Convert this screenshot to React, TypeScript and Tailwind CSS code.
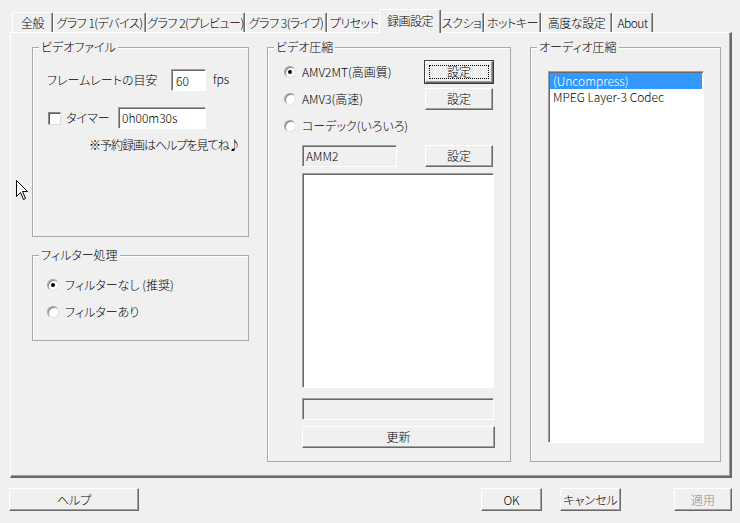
import type { ReactNode } from 'react';

type Tab = { label: string; cls: string; selected?: boolean };

const tabs: Tab[] = [
  { label: '全般', cls: 'w-[41px]' },
  { label: 'グラフ 1(デバイス)', cls: 'w-[93px]' },
  { label: 'グラフ 2(プレビュー)', cls: 'w-[99px]' },
  { label: 'グラフ 3(ライブ)', cls: 'w-[82px]' },
  { label: 'プリセット', cls: 'w-[54px]' },
  { label: '録画設定', cls: 'w-[62px]', selected: true },
  { label: 'スクショ', cls: 'w-[45px]' },
  { label: 'ホットキー', cls: 'w-[57px]' },
  { label: '高度な設定', cls: 'w-[71px]' },
  { label: 'About', cls: 'w-[41px]' },
];

const raised =
  'border border-t-white border-l-white border-r-[#696969] border-b-[#696969] shadow-[inset_-1px_-1px_0_#a0a0a0] bg-[#f0f0f0]';
const sunken =
  'border border-t-[#a0a0a0] border-l-[#a0a0a0] border-r-white border-b-white shadow-[inset_1px_1px_0_#696969]';

function Btn({
  children,
  className = '',
  focus,
  disabled,
}: {
  children: ReactNode;
  className?: string;
  focus?: boolean;
  disabled?: boolean;
}) {
  return (
    <div
      className={`relative flex shrink-0 items-center justify-center leading-[14px] ${raised} ${
        focus ? 'outline outline-1 outline-[#3c3c3c]' : ''
      } ${disabled ? 'text-[#8d8d8d]' : 'text-black'} ${className}`}
    >
      {focus && <span className="absolute inset-[3px] border border-dotted border-black" />}
      {children}
    </div>
  );
}

function Radio({ checked }: { checked?: boolean }) {
  return (
    <span className="flex h-[12px] w-[12px] shrink-0 items-center justify-center rounded-full bg-white border border-t-[#a0a0a0] border-l-[#a0a0a0] border-r-[#e3e3e3] border-b-[#e3e3e3] shadow-[inset_1px_1px_0_#8a8a8a]">
      {checked && <span className="h-[4px] w-[4px] rounded-full bg-black" />}
    </span>
  );
}

function Group({ label, className, children }: { label: string; className: string; children: ReactNode }) {
  return (
    <div className={`relative shrink-0 border border-[#a9a9a9] shadow-[inset_1px_1px_0_#ffffff] ${className}`}>
      <span className="absolute -top-[8px] left-[6px] bg-[#f0f0f0] px-[2px] leading-[14px]">{label}</span>
      {children}
    </div>
  );
}

export default function App() {
  return (
    <div className="relative h-[523px] w-[740px] overflow-hidden whitespace-nowrap bg-[#f0f0f0] font-['Noto_Sans_CJK_JP',sans-serif] text-[12px] font-light leading-[14px] text-black [font-feature-settings:'palt']">
      {/* tab strip */}
      <div className="flex h-[32px] items-end pl-[12px] tracking-[-0.5px]">
        {tabs.map((t) =>
          t.selected ? (
            <div
              key={t.label}
              className={`relative z-10 -mx-[2px] -mb-px flex h-[24px] items-center justify-center rounded-t-[2px] border-t border-l border-r border-t-white border-l-white border-r-[#696969] bg-[#f0f0f0] pb-[2px] shadow-[inset_-1px_0_0_#a0a0a0] ${t.cls}`}
            >
              {t.label}
            </div>
          ) : (
            <div
              key={t.label}
              className={`flex h-[20px] items-center justify-center rounded-t-[2px] border-t border-l border-r border-t-white border-l-white border-r-[#696969] pt-[1px] shadow-[inset_-1px_0_0_#a0a0a0] ${t.cls}`}
            >
              {t.label}
            </div>
          ),
        )}
      </div>

      {/* tab page */}
      <div className="ml-[10px] flex h-[446px] w-[722px] border-t border-l border-r-2 border-b-2 border-t-white border-l-white border-r-[#696969] border-b-[#696969] pl-[21px] pt-[14px] shadow-[inset_-1px_-1px_0_#a0a0a0]">
        <div className="flex w-[217px] shrink-0 flex-col">
          <Group label="ビデオファイル" className="h-[190px] w-[217px] pl-[14px] pt-[21px]">
            <div className="flex h-[22px] items-center">
              <span className="w-[124px]">フレームレートの目安</span>
              <div className={`flex h-[22px] w-[35px] items-center bg-white pl-[4px] pt-[2px] ${sunken}`}>60</div>
              <span className="-mt-[3px] ml-[7px]">fps</span>
            </div>
            <div className="mt-[16px] flex h-[22px] items-center pl-px">
              <span className="h-[13px] w-[13px] shrink-0 bg-white border border-t-[#8a8a8a] border-l-[#8a8a8a] border-r-[#dcdcdc] border-b-[#dcdcdc] shadow-[inset_1px_1px_0_#5a5a5a]" />
              <span className="ml-[5px] w-[52px]">タイマー</span>
              <div className={`flex h-[22px] w-[88px] items-center bg-white pl-[3px] ${sunken}`}>0h00m30s</div>
            </div>
            <div className="mt-[9px] pl-[42px] tracking-[-1px]">※予約録画はヘルプを見てね♪</div>
          </Group>

          <Group label="フィルター処理" className="mt-[18px] h-[86px] w-[217px] pl-[14px] pt-[22px]">
            <div className="flex h-[14px] items-center">
              <Radio checked />
              <span className="ml-[6px]">フィルターなし (推奨)</span>
            </div>
            <div className="mt-[13px] flex h-[14px] items-center">
              <Radio />
              <span className="ml-[6px]">フィルターあり</span>
            </div>
          </Group>
        </div>

        <Group label="ビデオ圧縮" className="ml-[18px] h-[415px] w-[244px] pl-[16px] pt-[13px]">
          <div className="flex h-[22px] items-center">
            <Radio checked />
            <span className="ml-[6px] w-[123px]">AMV2MT(高画質)</span>
            <Btn focus className="h-[22px] w-[68px]">
              設定
            </Btn>
          </div>
          <div className="mt-[5px] flex h-[22px] items-center">
            <Radio />
            <span className="ml-[6px] w-[123px]">AMV3(高速)</span>
            <Btn className="h-[22px] w-[68px]">設定</Btn>
          </div>
          <div className="mt-[5px] flex h-[22px] items-center">
            <Radio />
            <span className="ml-[6px]">コーデック(いろいろ)</span>
          </div>
          <div className="mt-[8px] flex h-[22px] items-center">
            <div className={`ml-[18px] flex h-[22px] w-[95px] items-center bg-[#f0f0f0] pl-[3px] ${sunken}`}>AMM2</div>
            <Btn className="ml-[28px] h-[22px] w-[68px]">設定</Btn>
          </div>
          <div className={`ml-[18px] mt-[6px] h-[215px] w-[192px] bg-white ${sunken}`} />
          <div className={`ml-[18px] mt-[10px] h-[22px] w-[192px] bg-[#f0f0f0] ${sunken}`} />
          <Btn className="ml-[18px] mt-[6px] h-[22px] w-[193px]">更新</Btn>
        </Group>

        <Group label="オーディオ圧縮" className="ml-[19px] h-[415px] w-[191px] pl-[17px] pt-[23px]">
          <div className={`h-[372px] w-[156px] bg-white p-px ${sunken}`}>
            <div className="h-[16px] bg-[#3399ff] pl-[3px] leading-[16px] text-white">(Uncompress)</div>
            <div className="h-[16px] pl-[3px] leading-[16px]">MPEG Layer-3 Codec</div>
          </div>
        </Group>
      </div>

      {/* dialog buttons */}
      <div className="mt-[10px] flex h-[23px] pl-[9px] pr-[8px]">
        <Btn className="h-[23px] w-[130px]">ヘルプ</Btn>
        <div className="flex-1" />
        <Btn className="h-[23px] w-[61px]">OK</Btn>
        <Btn className="ml-[18px] h-[23px] w-[61px]">キャンセル</Btn>
        <Btn disabled className="ml-[53px] h-[23px] w-[58px]">
          適用
        </Btn>
      </div>

      {/* mouse pointer */}
      <svg className="absolute left-[16px] top-[180px]" width="13" height="21" viewBox="0 0 13 21">
        <path
          d="M0.5 0.5 L0.5 16.5 L4.5 12.5 L7.5 19.5 L9.5 18.5 L6.5 11.5 L11.5 11.5 Z"
          fill="#ffffff"
          stroke="#000000"
          strokeWidth="1"
          strokeLinejoin="miter"
        />
      </svg>
    </div>
  );
}
